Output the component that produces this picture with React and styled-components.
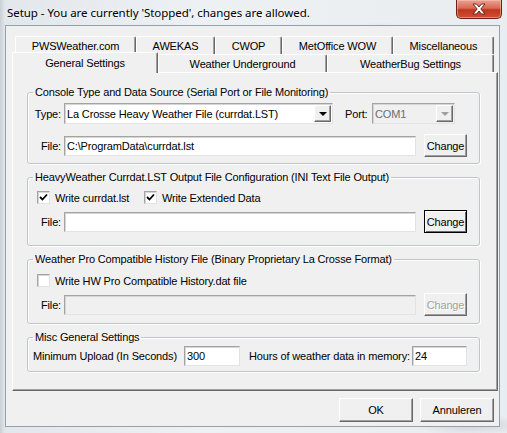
import React from "react";
import styled, { createGlobalStyle, css } from "styled-components";

const GlobalStyle = createGlobalStyle`
  html, body {
    margin: 0;
    padding: 0;
  }
  body {
    font-family: "Liberation Sans", Arial, sans-serif;
    font-size: 11px;
    letter-spacing: -0.15px;
    color: #000;
  }
`;

const Window = styled.div`
  position: relative;
  width: 507px;
  height: 433px;
  overflow: hidden;
  display: flex;
  flex-direction: column;
  background:
    radial-gradient(ellipse 60px 10px at 470px 425px, rgba(120, 130, 140, 0.25), transparent),
    radial-gradient(ellipse 40px 8px at 380px 30px, rgba(150, 155, 160, 0.18), transparent),
    linear-gradient(90deg, #c9cfd4 0px, #e2e7eb 5px, #eef1f4 40%, #e9edf0 100%);
`;

const TitleBar = styled.div`
  height: 25px;
  flex: none;
  display: flex;
  align-items: center;
  padding-left: 7px;
  font-family: "Noto Sans", "Liberation Sans", sans-serif;
  font-size: 11.5px;
  letter-spacing: -0.05px;
  color: #000;
  text-shadow: 0 0 6px rgba(255, 255, 255, 0.9);
`;

const CloseButton = styled.div`
  position: absolute;
  top: 0;
  right: 5px;
  width: 46px;
  height: 19px;
  box-sizing: border-box;
  border: 1px solid #6b2018;
  border-top: none;
  border-radius: 0 0 5px 5px;
  background: linear-gradient(180deg, #e8a292 0%, #d96a54 45%, #c2341c 55%, #cf5034 100%);
  box-shadow: inset 0 0 0 1px rgba(255, 210, 200, 0.45);
  display: flex;
  align-items: center;
  justify-content: center;
`;

const Client = styled.div`
  flex: 1;
  margin: 0 7px 6px 5px;
  border: 1px solid #93a0ad;
  background: #f0f0f0;
  display: flex;
  flex-direction: column;
  padding: 10px 1px 0 6px;
`;

const TabControl = styled.div`
  display: flex;
  flex-direction: column;
`;

const TabRow = styled.div`
  display: flex;
  height: 18px;
  padding-left: ${(p) => p.$indent || 0}px;
  position: relative;
  z-index: ${(p) => (p.$front ? 2 : 1)};
`;

const Tab = styled.div`
  width: ${(p) => p.$w}px;
  box-sizing: border-box;
  height: 18px;
  display: flex;
  align-items: center;
  justify-content: center;
  background: #f0f0f0;
  border-top: 1px solid #fff;
  border-left: 1px solid #fff;
  border-right: 1px solid #696969;
  border-radius: 2px 2px 0 0;
  box-shadow: inset -1px 0 0 #a0a0a0;
  white-space: nowrap;

  ${(p) =>
    p.$active &&
    css`
      height: 21px;
      margin-top: -2px;
      margin-bottom: -1px;
      position: relative;
      z-index: 3;
      padding-bottom: 1px;
    `}
`;

const Panel = styled.div`
  height: 319px;
  box-sizing: border-box;
  border-top: 1px solid #fff;
  border-left: 1px solid #fff;
  border-right: 1px solid #696969;
  border-bottom: 1px solid #696969;
  box-shadow: inset -1px -1px 0 #a0a0a0;
  padding: 13px 0 0 14px;
  display: flex;
  flex-direction: column;
  gap: 7px;
`;

const Group = styled.fieldset`
  margin: 0;
  width: 453px;
  height: ${(p) => p.$h}px;
  box-sizing: border-box;
  min-width: 0;
  padding: ${(p) => p.$pad}px 0 0 5px;
  border: 1px solid #bfc5ca;
  border-radius: 3px;
  box-shadow: inset 1px 1px 0 #fff, 1px 1px 0 #fff;
  display: flex;
  flex-direction: column;
  gap: ${(p) => p.$gap}px;
`;

const Legend = styled.legend`
  padding: 0 2px;
  line-height: 13px;
  font-size: 11px;
`;

const Row = styled.div`
  display: flex;
  align-items: center;
  height: 23px;
`;

const FieldLabel = styled.span`
  width: ${(p) => p.$w || 28}px;
  margin-left: ${(p) => p.$ml || 0}px;
  margin-right: ${(p) => p.$mr ?? 3}px;
  text-align: ${(p) => p.$align || "right"};
  white-space: nowrap;
  flex: none;
`;

const sunken = css`
  box-sizing: border-box;
  border: 1px solid;
  border-color: #a3a3a3 #e3e3e3 #e3e3e3 #a3a3a3;
  box-shadow: inset 1px 1px 0 #d6d6d6;
`;

const TextBox = styled.div`
  ${sunken};
  width: ${(p) => p.$w}px;
  height: 20px;
  flex: none;
  display: flex;
  align-items: center;
  padding-left: 2px;
  background: ${(p) => (p.$disabled ? "#f0f0f0" : "#fff")};
  white-space: nowrap;
  overflow: hidden;
`;

const Combo = styled.div`
  ${sunken};
  width: ${(p) => p.$w}px;
  height: 21px;
  flex: none;
  display: flex;
  align-items: center;
  justify-content: space-between;
  padding: 0 1px 0 2px;
  background: ${(p) => (p.$disabled ? "#f0f0f0" : "#fff")};
  color: ${(p) => (p.$disabled ? "#6d6d6d" : "#000")};
  white-space: nowrap;
`;

const DropArrow = styled.span`
  width: 17px;
  height: 17px;
  box-sizing: border-box;
  flex: none;
  display: flex;
  align-items: center;
  justify-content: center;
  background: #f0f0f0;
  border: 1px solid;
  border-color: #fff #696969 #696969 #fff;
  box-shadow: inset -1px -1px 0 #a0a0a0;

  &::after {
    content: "";
    border-left: 4px solid transparent;
    border-right: 4px solid transparent;
    border-top: 4px solid ${(p) => (p.$disabled ? "#a0a0a0" : "#000")};
    margin-top: 1px;
  }
`;

const Button = styled.div`
  width: ${(p) => p.$w}px;
  height: ${(p) => p.$h || 23}px;
  margin-left: ${(p) => p.$ml || 0}px;
  box-sizing: border-box;
  flex: none;
  display: flex;
  align-items: center;
  justify-content: center;
  background: #f0f0f0;
  border: 1px solid;
  border-color: #fff #696969 #696969 #fff;
  box-shadow: inset -1px -1px 0 #a0a0a0;
  color: ${(p) => (p.$disabled ? "#a0a0a0" : "#000")};
  text-shadow: ${(p) => (p.$disabled ? "1px 1px 0 #fff" : "none")};

  ${(p) =>
    p.$focused &&
    css`
      border-color: #000;
      box-shadow: inset 1px 1px 0 #fff, inset -1px -1px 0 #696969;
    `}
`;

const CheckItem = styled.label`
  display: flex;
  align-items: center;
  gap: 5px;
  width: ${(p) => p.$w || "auto"};
  margin-left: ${(p) => p.$ml || 0}px;
  flex: none;
  white-space: nowrap;
`;

const CheckBox = styled.span`
  ${sunken};
  width: 13px;
  height: 13px;
  background: #fff;
  display: flex;
  align-items: center;
  justify-content: center;
`;

const ButtonBar = styled.div`
  display: flex;
  justify-content: flex-end;
  gap: 7px;
  margin-top: 7px;
  padding-right: 4px;
`;

function Check({ checked }) {
  return (
    <CheckBox>
      {checked && (
        <svg width="9" height="9" viewBox="0 0 9 9">
          <path d="M1 4 L3.5 6.5 L8 1.5" fill="none" stroke="#000" strokeWidth="1.8" />
        </svg>
      )}
    </CheckBox>
  );
}

export default function App() {
  return (
    <>
      <GlobalStyle />
      <Window>
        <TitleBar>Setup - You are currently 'Stopped', changes are allowed.</TitleBar>
        <CloseButton>
          <svg width="14" height="12" viewBox="0 0 14 12">
            <path
              d="M1 1 H4.5 L7 4 L9.5 1 H13 L8.8 6 L13 11 H9.5 L7 8 L4.5 11 H1 L5.2 6 Z"
              fill="#fff"
              stroke="#5a1d14"
              strokeWidth="0.9"
              strokeLinejoin="round"
            />
          </svg>
        </CloseButton>

        <Client>
          <TabControl>
            <TabRow $indent={3}>
              <Tab $w={121}>PWSWeather.com</Tab>
              <Tab $w={79}>AWEKAS</Tab>
              <Tab $w={67}>CWOP</Tab>
              <Tab $w={111}>MetOffice WOW</Tab>
              <Tab $w={101}>Miscellaneous</Tab>
            </TabRow>
            <TabRow $front>
              <Tab $w={146} $active>
                General Settings
              </Tab>
              <Tab $w={169}>Weather Underground</Tab>
              <Tab $w={167}>WeatherBug Settings</Tab>
            </TabRow>

            <Panel>
              <Group $h={78} $pad={3} $gap={9}>
                <Legend>Console Type and Data Source (Serial Port or File Monitoring)</Legend>
                <Row>
                  <FieldLabel>Type:</FieldLabel>
                  <Combo $w={269}>
                    La Crosse Heavy Weather File (currdat.LST)
                    <DropArrow />
                  </Combo>
                  <FieldLabel $w={27} $ml={12} $mr={0} $align="left">
                    Port:
                  </FieldLabel>
                  <Combo $w={83} $disabled>
                    COM1
                    <DropArrow $disabled />
                  </Combo>
                </Row>
                <Row>
                  <FieldLabel>File:</FieldLabel>
                  <TextBox $w={352}>C:\ProgramData\currdat.lst</TextBox>
                  <Button $w={43} $ml={8}>
                    Change
                  </Button>
                </Row>
              </Group>

              <Group $h={75} $pad={2} $gap={1}>
                <Legend>HeavyWeather Currdat.LST Output File Configuration (INI Text File Output)</Legend>
                <Row>
                  <CheckItem $ml={4} $w="107px">
                    <Check checked />
                    Write currdat.lst
                  </CheckItem>
                  <CheckItem>
                    <Check checked />
                    Write Extended Data
                  </CheckItem>
                </Row>
                <Row>
                  <FieldLabel>File:</FieldLabel>
                  <TextBox $w={352} />
                  <Button $w={43} $ml={8} $focused>
                    Change
                  </Button>
                </Row>
              </Group>

              <Group $h={71} $pad={3} $gap={1}>
                <Legend>Weather Pro Compatible History File (Binary Proprietary La Crosse Format)</Legend>
                <Row>
                  <CheckItem $ml={4}>
                    <Check />
                    Write HW Pro Compatible History.dat file
                  </CheckItem>
                </Row>
                <Row>
                  <FieldLabel>File:</FieldLabel>
                  <TextBox $w={352} $disabled />
                  <Button $w={43} $ml={8} $disabled>
                    Change
                  </Button>
                </Row>
              </Group>

              <Group $h={41} $pad={0} $gap={0}>
                <Legend>Misc General Settings</Legend>
                <Row>
                  <FieldLabel $w={151} $mr={0} $align="left">
                    Minimum Upload (In Seconds)
                  </FieldLabel>
                  <TextBox $w={56}>300</TextBox>
                  <FieldLabel $w={163} $ml={9} $mr={0} $align="left">
                    Hours of weather data in memory:
                  </FieldLabel>
                  <TextBox $w={55}>24</TextBox>
                </Row>
              </Group>
            </Panel>
          </TabControl>

          <ButtonBar>
            <Button $w={74} $h={24}>
              OK
            </Button>
            <Button $w={74} $h={24}>
              Annuleren
            </Button>
          </ButtonBar>
        </Client>
      </Window>
    </>
  );
}
